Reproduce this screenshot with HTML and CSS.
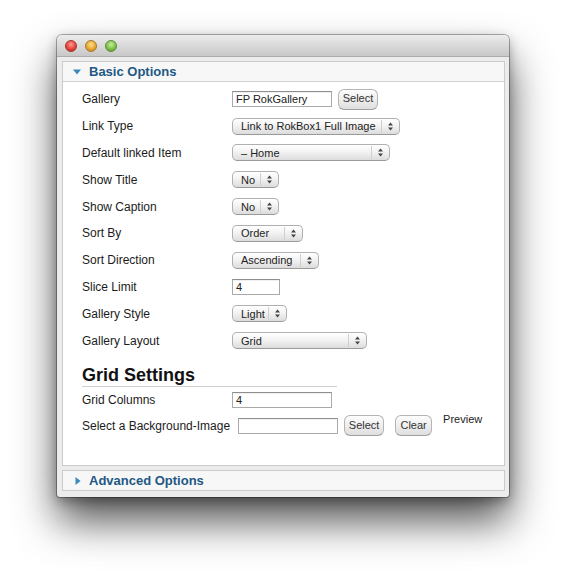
FILE: index.html
```html
<!DOCTYPE html>
<html>
<head>
<meta charset="utf-8">
<title>RokGallery Options</title>
<link rel="stylesheet" href="styles.css">
</head>
<body>
<div class="stage">
  <div class="window">
    <div class="titlebar">
      <span class="light red"></span>
      <span class="light yellow"></span>
      <span class="light green"></span>
    </div>
    <div class="content">
      <section class="panel">
        <div class="panel-head">
          <svg class="tri" width="8" height="6" viewBox="0 0 8 6"><polygon points="0,0.5 8,0.5 4,5.5" fill="#3a89bb"/></svg>
          <span class="panel-title">Basic Options</span>
        </div>
        <div class="panel-body">
          <div class="rows">
            <div class="row"><span class="label">Gallery</span><div class="ctrl"><span class="input w100">FP RokGallery</span><span class="btn gap6">Select</span></div></div>
            <div class="row"><span class="label">Link Type</span><div class="ctrl"><span class="select w168"><span class="sel-text">Link to RokBox1 Full Image</span><span class="sel-arrow"><svg width="5" height="9" viewBox="0 0 5 9"><polygon points="0,3.5 2.5,0.5 5,3.5" fill="#444"/><polygon points="0,5.5 5,5.5 2.5,8.5" fill="#444"/></svg></span></span></div></div>
            <div class="row"><span class="label">Default linked Item</span><div class="ctrl"><span class="select w158"><span class="sel-text">– Home</span><span class="sel-arrow"><svg width="5" height="9" viewBox="0 0 5 9"><polygon points="0,3.5 2.5,0.5 5,3.5" fill="#444"/><polygon points="0,5.5 5,5.5 2.5,8.5" fill="#444"/></svg></span></span></div></div>
            <div class="row"><span class="label">Show Title</span><div class="ctrl"><span class="select w47"><span class="sel-text">No</span><span class="sel-arrow"><svg width="5" height="9" viewBox="0 0 5 9"><polygon points="0,3.5 2.5,0.5 5,3.5" fill="#444"/><polygon points="0,5.5 5,5.5 2.5,8.5" fill="#444"/></svg></span></span></div></div>
            <div class="row"><span class="label">Show Caption</span><div class="ctrl"><span class="select w47"><span class="sel-text">No</span><span class="sel-arrow"><svg width="5" height="9" viewBox="0 0 5 9"><polygon points="0,3.5 2.5,0.5 5,3.5" fill="#444"/><polygon points="0,5.5 5,5.5 2.5,8.5" fill="#444"/></svg></span></span></div></div>
            <div class="row"><span class="label">Sort By</span><div class="ctrl"><span class="select w71"><span class="sel-text">Order</span><span class="sel-arrow"><svg width="5" height="9" viewBox="0 0 5 9"><polygon points="0,3.5 2.5,0.5 5,3.5" fill="#444"/><polygon points="0,5.5 5,5.5 2.5,8.5" fill="#444"/></svg></span></span></div></div>
            <div class="row"><span class="label">Sort Direction</span><div class="ctrl"><span class="select w87"><span class="sel-text">Ascending</span><span class="sel-arrow"><svg width="5" height="9" viewBox="0 0 5 9"><polygon points="0,3.5 2.5,0.5 5,3.5" fill="#444"/><polygon points="0,5.5 5,5.5 2.5,8.5" fill="#444"/></svg></span></span></div></div>
            <div class="row"><span class="label">Slice Limit</span><div class="ctrl"><span class="input w48">4</span></div></div>
            <div class="row"><span class="label">Gallery Style</span><div class="ctrl"><span class="select w55"><span class="sel-text">Light</span><span class="sel-arrow"><svg width="5" height="9" viewBox="0 0 5 9"><polygon points="0,3.5 2.5,0.5 5,3.5" fill="#444"/><polygon points="0,5.5 5,5.5 2.5,8.5" fill="#444"/></svg></span></span></div></div>
            <div class="row"><span class="label">Gallery Layout</span><div class="ctrl"><span class="select w135"><span class="sel-text">Grid</span><span class="sel-arrow"><svg width="5" height="9" viewBox="0 0 5 9"><polygon points="0,3.5 2.5,0.5 5,3.5" fill="#444"/><polygon points="0,5.5 5,5.5 2.5,8.5" fill="#444"/></svg></span></span></div></div>
          </div>
          <h2 class="section-title">Grid Settings</h2>
          <div class="row row-gc"><span class="label">Grid Columns</span><div class="ctrl"><span class="input w100">4</span></div></div>
          <div class="row-bg">
            <span class="label label-bg">Select a Background-Image</span>
            <span class="input w100"></span>
            <span class="btn">Select</span>
            <span class="btn w37 gap11">Clear</span>
            <span class="preview">Preview</span>
          </div>
        </div>
      </section>
      <section class="panel panel-collapsed">
        <div class="panel-head">
          <svg class="tri" width="8" height="8" viewBox="0 0 8 8"><polygon points="1.5,0 6.5,4 1.5,8" fill="#3a89bb"/></svg>
          <span class="panel-title">Advanced Options</span>
        </div>
      </section>
    </div>
  </div>
</div>
</body>
</html>
```
FILE: styles.css
```css
html, body {
  margin: 0;
  padding: 0;
  background: #ffffff;
}
body {
  font-family: "Liberation Sans", Arial, sans-serif;
  color: #1b1b1b;
}
.stage {
  height: 576px;
  box-sizing: border-box;
  padding: 35px 0 0 57px;
}
.window {
  width: 452px;
  height: 462px;
  box-sizing: border-box;
  border-radius: 5px 5px 3px 3px;
  background: #ececec;
  box-shadow: 0 0 0 1px rgba(0,0,0,0.3), 0 24px 42px rgba(0,0,0,0.68), 0 4px 12px rgba(0,0,0,0.3);
  overflow: hidden;
  display: flex;
  flex-direction: column;
}
.titlebar {
  height: 22px;
  box-sizing: border-box;
  background: linear-gradient(#ececec, #d6d6d6 60%, #c8c8c8);
  border-bottom: 1px solid #ababab;
  display: flex;
  align-items: center;
  padding-left: 8px;
  gap: 8px;
}
.light {
  width: 12px;
  height: 12px;
  border-radius: 50%;
  box-sizing: border-box;
}
.red {
  background: radial-gradient(circle at 50% 35%, #ff9a8f 0, #e4453c 55%, #b5231c 100%);
  border: 1px solid #a6322c;
}
.yellow {
  background: radial-gradient(circle at 50% 35%, #ffe08a 0, #e7a836 55%, #b57c18 100%);
  border: 1px solid #a8772a;
}
.green {
  background: radial-gradient(circle at 50% 35%, #c7ee9a 0, #7fc24a 55%, #4d8f2a 100%);
  border: 1px solid #5b8f3a;
}
.content {
  padding: 4px 4px 6px 5px;
  display: flex;
  flex-direction: column;
  gap: 4px;
}
.panel {
  border: 1px solid #cbcbcb;
  background: #ffffff;
}
.panel-head {
  height: 20px;
  box-sizing: border-box;
  background: #f7f7f7;
  border-bottom: 1px solid #d2d2d2;
  display: flex;
  align-items: center;
  padding-left: 10px;
  gap: 8px;
}
.panel-collapsed .panel-head {
  height: 19px;
  border-bottom: none;
  padding-left: 11px;
  gap: 7px;
}
.panel-title {
  font-size: 13px;
  font-weight: bold;
  color: #1f5885;
}
.panel-body {
  height: 383px;
  box-sizing: border-box;
  padding: 4px 0 0 19px;
}
.row {
  display: grid;
  grid-template-columns: 150px auto;
  align-items: center;
  height: 26.8px;
}
.label {
  font-size: 12px;
  color: #1b1b1b;
  white-space: nowrap;
}
.ctrl {
  display: flex;
  align-items: center;
}
.input {
  display: inline-flex;
  align-items: center;
  height: 16px;
  box-sizing: border-box;
  border: 1px solid #aaaaaa;
  border-top-color: #8e8e8e;
  background: #fff;
  font-size: 11px;
  color: #222;
  padding-left: 3px;
  box-shadow: inset 0 1px 0 rgba(0,0,0,0.06);
}
.w100 { width: 100px; }
.w48 { width: 48px; }
.btn {
  display: inline-flex;
  align-items: center;
  justify-content: center;
  width: 40px;
  height: 21px;
  box-sizing: border-box;
  border: 1px solid #b4b4b4;
  border-bottom-color: #a0a0a0;
  border-radius: 6px;
  background: linear-gradient(#fdfdfd, #f0f0f0 45%, #dedede);
  font-size: 11px;
  color: #333;
  padding-bottom: 2px;
}
.btn.w37 { width: 37px; }
.gap6 { margin-left: 6px; }
.select {
  display: inline-flex;
  align-items: center;
  height: 17px;
  box-sizing: border-box;
  border: 1px solid #b0b0b0;
  border-bottom-color: #9a9a9a;
  border-radius: 5px;
  background: linear-gradient(#ffffff, #f3f3f3 45%, #dcdcdc);
  font-size: 11px;
  color: #222;
}
.sel-text {
  flex: 1;
  padding-left: 8px;
  white-space: nowrap;
  overflow: hidden;
}
.sel-arrow {
  width: 17px;
  height: 13px;
  border-left: 1px solid #cfcfcf;
  display: flex;
  align-items: center;
  justify-content: center;
}
.w168 { width: 168px; }
.w158 { width: 158px; }
.w47 { width: 47px; }
.w71 { width: 71px; }
.w87 { width: 87px; }
.w55 { width: 55px; }
.w135 { width: 135px; }
.section-title {
  margin: 10px 0 0 0;
  width: 255px;
  height: 23px;
  box-sizing: border-box;
  line-height: 22px;
  font-size: 18px;
  font-weight: bold;
  color: #111;
  border-bottom: 1px solid #d0d0d0;
}
.row-gc {
  height: 26px;
}
.row-bg {
  height: 26px;
  display: flex;
  align-items: center;
  gap: 6px;
}
.label-bg {
  margin-right: 2px;
}
.gap11 { margin-left: 5px; }
.preview {
  font-size: 11px;
  color: #222;
  margin-left: 5px;
  align-self: flex-start;
  margin-top: 0px;
}
```
